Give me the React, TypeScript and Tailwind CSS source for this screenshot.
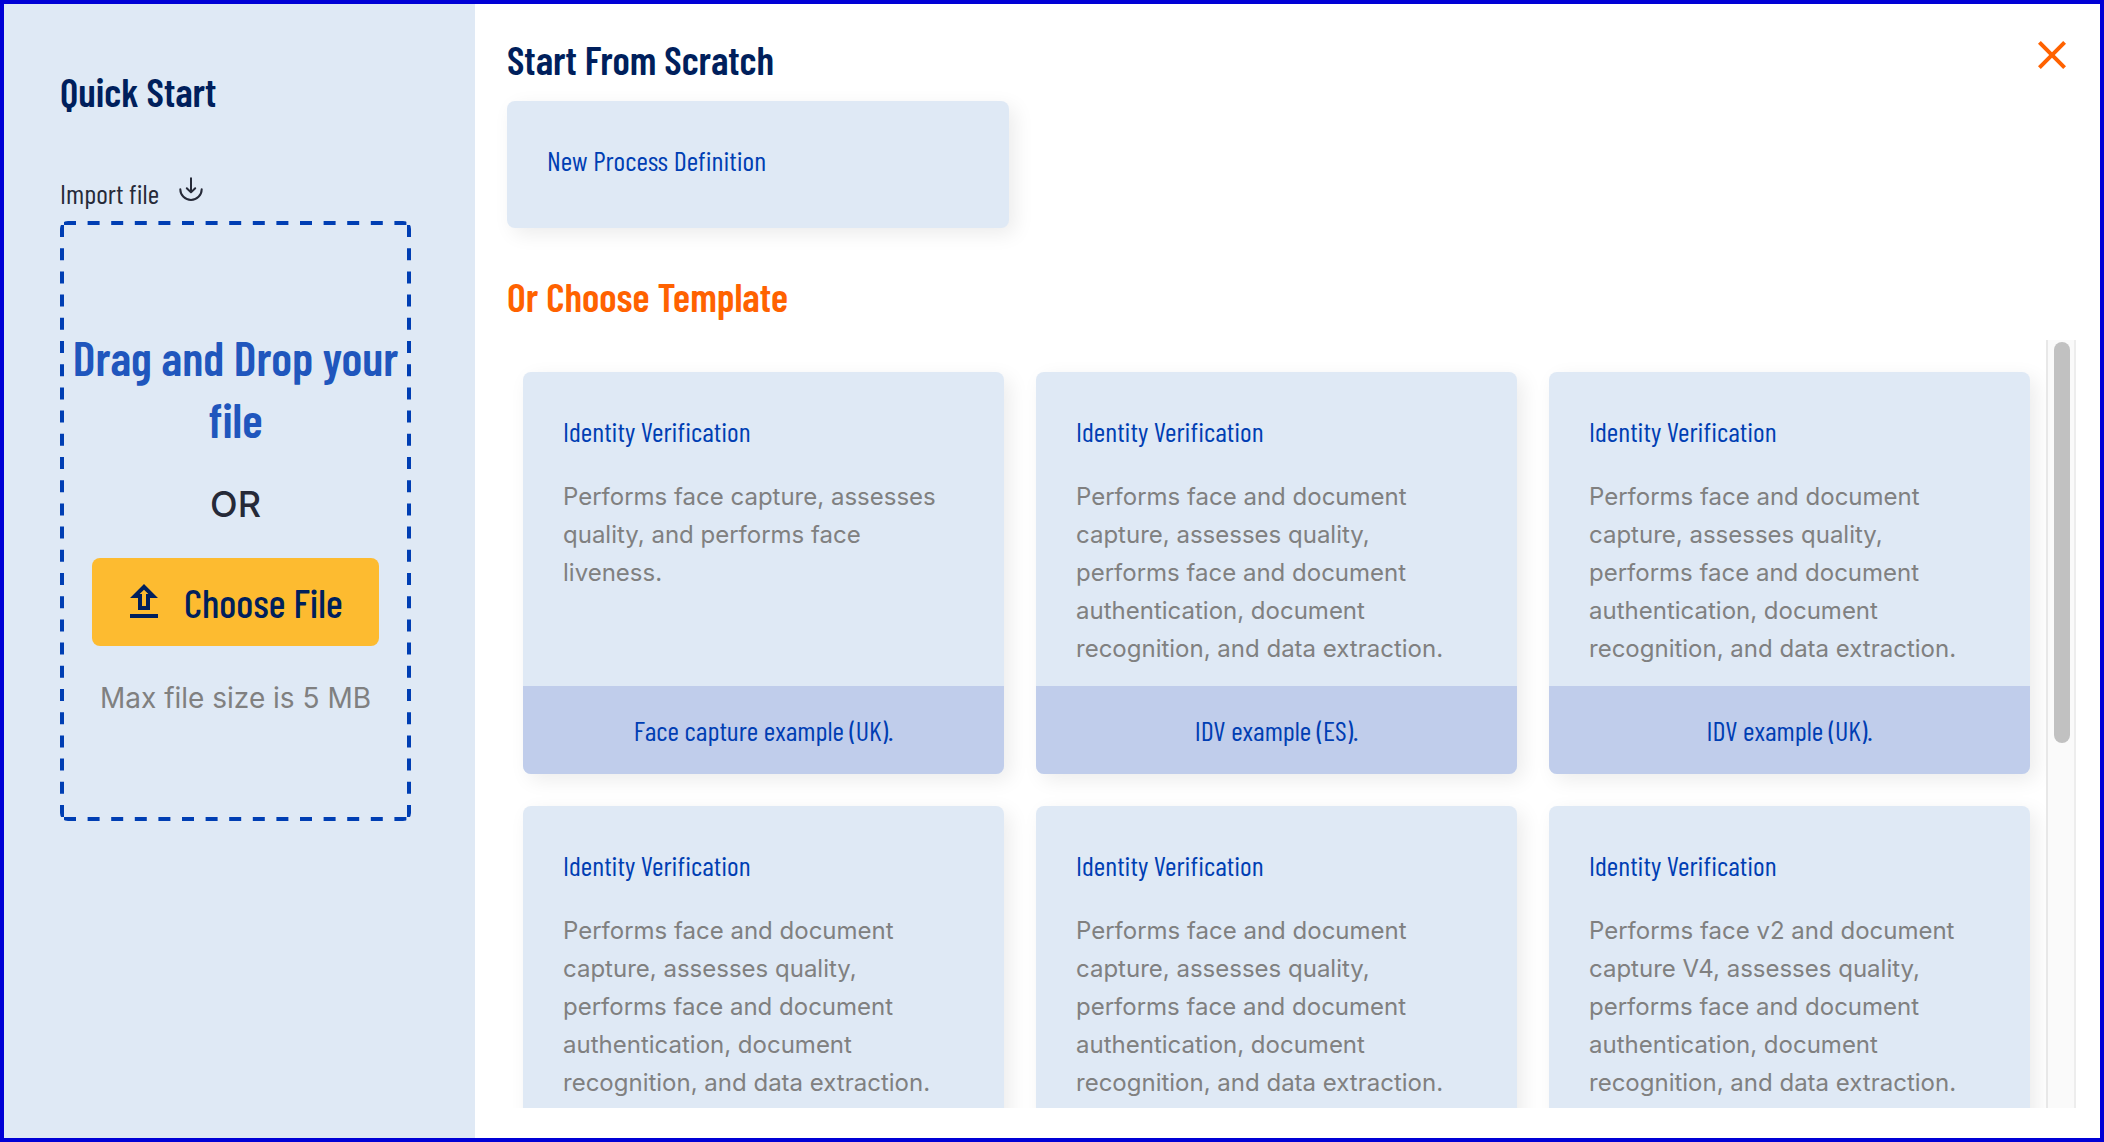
import { useRef, useState, type UIEvent } from "react";

type Template = {
  id: string;
  title: string;
  description: string;
  example: string;
};

const DOCUMENT_FLOW =
  "Performs face and document capture, assesses quality, performs face and document authentication, document recognition, and data extraction.";

const templates: Template[] = [
  {
    id: "face-uk",
    title: "Identity Verification",
    description: "Performs face capture, assesses quality, and performs face liveness.",
    example: "Face capture example (UK).",
  },
  {
    id: "idv-es",
    title: "Identity Verification",
    description: DOCUMENT_FLOW,
    example: "IDV example (ES).",
  },
  {
    id: "idv-uk",
    title: "Identity Verification",
    description: DOCUMENT_FLOW,
    example: "IDV example (UK).",
  },
  {
    id: "idv-4",
    title: "Identity Verification",
    description: DOCUMENT_FLOW,
    example: "",
  },
  {
    id: "idv-5",
    title: "Identity Verification",
    description: DOCUMENT_FLOW,
    example: "",
  },
  {
    id: "idv-v2",
    title: "Identity Verification",
    description:
      "Performs face v2 and document capture V4, assesses quality, performs face and document authentication, document recognition, and data extraction.",
    example: "",
  },
];

function ImportIcon() {
  return (
    <svg
      viewBox="0 0 32 32"
      fill="none"
      stroke="currentColor"
      strokeWidth="2"
      strokeLinecap="round"
      strokeLinejoin="round"
      className="size-8"
      aria-hidden="true"
    >
      <path d="M16 4.2v14M11.8 14.2l4.2 4.2 4.2-4.2" />
      <path d="M5.3 15.2a10.7 10.7 0 0 0 21.4 0" />
    </svg>
  );
}

function UploadIcon() {
  return (
    <svg viewBox="0 0 24 24" fill="currentColor" className="size-12" aria-hidden="true">
      <path d="M9 16h6v-6h4l-7-7-7 7h4v6zm3-10.17L14.17 8H13v6h-2V8H9.83L12 5.83zM5 18h14v2H5v-2z" />
    </svg>
  );
}

function CloseIcon() {
  return (
    <svg viewBox="0 1 24 22" fill="currentColor" className="h-11 w-12" aria-hidden="true">
      <path d="M19 6.41L17.59 5 12 10.59 6.41 5 5 6.41 10.59 12 5 17.59 6.41 19 12 13.41 17.59 19 19 17.59 13.41 12z" />
    </svg>
  );
}

// CSS dashed borders pack the dashes too tightly at this width, so the outline is stroked by hand.
function DashedOutline() {
  return (
    <svg
      stroke="#003eb3"
      strokeWidth="8"
      className="pointer-events-none absolute inset-0 size-full"
      aria-hidden="true"
    >
      <g strokeDasharray="12 11.6">
        <line x1="4" y1="0" x2="100%" y2="0" />
        <line x1="4" y1="100%" x2="100%" y2="100%" />
      </g>
      <g strokeDasharray="12 11.2">
        <line x1="0" y1="4" x2="0" y2="100%" />
        <line x1="100%" y1="4" x2="100%" y2="100%" />
      </g>
    </svg>
  );
}

function QuickStart() {
  const fileInput = useRef<HTMLInputElement>(null);

  return (
    <aside className="w-[471px] shrink-0 bg-[#dfe9f5] pt-[61px] pr-16 pl-14">
      <h2 className="text-[40px] leading-[52px] font-semibold text-[#001f5c]">Quick Start</h2>
      <div className="mt-[57px] flex items-start gap-4 text-[#262a38]">
        <label htmlFor="import-file" className="text-[28px] leading-[38px]">
          Import file
        </label>
        <ImportIcon />
      </div>
      <div className="relative mt-[9px] flex h-[600px] flex-col items-center gap-[30px] overflow-hidden rounded-lg px-1 pt-[105px] text-center">
        <DashedOutline />
        <p className="text-[48px] leading-[62px] font-semibold text-[#2056bd]">
          Drag and Drop your file
        </p>
        <p className="font-['Inter',sans-serif] text-[36px] leading-[48px] font-medium text-[#262a38]">
          OR
        </p>
        <input id="import-file" ref={fileInput} type="file" className="hidden" />
        <button
          type="button"
          onClick={() => fileInput.current?.click()}
          className="flex h-[88px] w-[287px] cursor-pointer items-center gap-4 rounded-lg bg-[#fdbb30] pl-7 text-[40px] leading-[52px] font-medium text-[#001f5c]"
        >
          <UploadIcon />
          Choose File
        </button>
        <p className="font-['Inter',sans-serif] text-[28px] leading-[44px] text-[#808080]">
          Max file size is 5 MB
        </p>
      </div>
    </aside>
  );
}

function TemplateCard({ template }: { template: Template }) {
  return (
    <button
      type="button"
      className="flex h-[402px] cursor-pointer flex-col overflow-hidden rounded-lg bg-[#dfe9f5] text-left shadow-[6px_6px_20px_rgba(0,0,0,0.08)]"
    >
      <span className="flex w-full flex-1 flex-col gap-7 px-10 pt-10">
        <span className="text-[28px] leading-[38px] text-[#003eb3]">{template.title}</span>
        <span className="font-['Inter',sans-serif] text-[24px] leading-[38px] text-[#808080]">
          {template.description}
        </span>
      </span>
      <span className="flex h-[88px] w-full items-center justify-center bg-[#c0cdeb] text-[28px] leading-[38px] text-[#003eb3]">
        {template.example}
      </span>
    </button>
  );
}

function TemplateList() {
  const [progress, setProgress] = useState(0);

  const handleScroll = (event: UIEvent<HTMLDivElement>) => {
    const { scrollTop, scrollHeight, clientHeight } = event.currentTarget;
    const range = scrollHeight - clientHeight;
    setProgress(range > 0 ? scrollTop / range : 0);
  };

  return (
    <div className="mt-[18px] flex min-h-0 flex-1">
      <div
        onScroll={handleScroll}
        className="grid flex-1 auto-rows-max grid-cols-3 gap-8 overflow-y-auto px-4 py-8 [scrollbar-width:none]"
      >
        {templates.map((template) => (
          <TemplateCard key={template.id} template={template} />
        ))}
      </div>
      <div
        aria-hidden="true"
        className="flex w-[30px] shrink-0 flex-col items-start border-x-2 border-l-[#e8e8e8] border-r-[#ededed] bg-[#fafafa] py-0.5 pl-1.5"
      >
        <div style={{ flexGrow: progress }} />
        <div className="h-[52.5%] w-4 shrink-0 rounded-full bg-[#c1c1c1]" />
      </div>
    </div>
  );
}

export default function App() {
  return (
    <div
      role="dialog"
      aria-label="Quick Start"
      className="flex h-screen border-4 border-[#0000d6] bg-white font-['Barlow_Condensed',sans-serif]"
    >
      <QuickStart />
      <main className="flex min-w-0 flex-1 flex-col pt-[29px] pr-6 pb-[30px] pl-8">
        <header className="flex items-start justify-between">
          <h2 className="text-[40px] leading-[52px] font-semibold text-[#001f5c]">
            Start From Scratch
          </h2>
          <button type="button" aria-label="Close" className="cursor-pointer text-[#ff6200]">
            <CloseIcon />
          </button>
        </header>
        <div className="mt-4 grid grid-cols-3 gap-8">
          <button
            type="button"
            className="flex h-[127px] cursor-pointer items-start rounded-lg bg-[#dfe9f5] px-10 pt-10 text-[28px] leading-[38px] text-[#003eb3] shadow-[6px_6px_20px_rgba(0,0,0,0.08)]"
          >
            New Process Definition
          </button>
        </div>
        <h2 className="mt-[42px] text-[40px] leading-[52px] font-semibold text-[#ff6200]">
          Or Choose Template
        </h2>
        <TemplateList />
      </main>
    </div>
  );
}
